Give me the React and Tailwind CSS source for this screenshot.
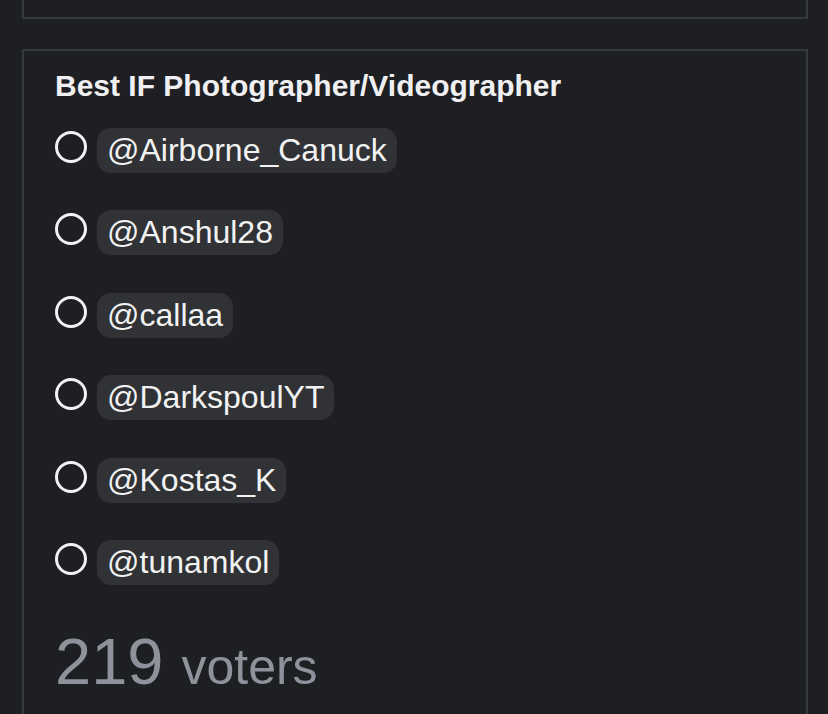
const options = [
  'Airborne_Canuck',
  'Anshul28',
  'callaa',
  'DarkspoulYT',
  'Kostas_K',
  'tunamkol',
];

const App = () => {
  return (
    <div
      className="min-h-[714px] h-[714px] overflow-hidden bg-[#1e1f23] pl-[22px] pr-[20px]"
      style={{ fontFamily: '"Liberation Sans", Arial, sans-serif' }}
    >
      {/* previous poll, only its bottom edge shows */}
      <div className="h-[19px] border-x-2 border-b-2 border-[#35383d]"></div>

      {/* Poll card */}
      <div className="mt-[30px] border-2 border-[#35383d] pl-[31px] pt-[20px] pb-[80px]">
        <h2 className="text-[30px] leading-none font-bold text-[#f0f0f2]">
          Best IF Photographer/Videographer
        </h2>

        <div className="mt-[27px] flex flex-col gap-[37.4px]">
          {options.map((name) => (
            <div key={name} className="flex items-start gap-[10px]">
              <div className="mt-[3px] h-[32px] w-[32px] shrink-0 rounded-full border-[3px] border-[#f2f2f2]"></div>
              <span className="h-[45px] rounded-[14px] bg-[#303236] px-[10px] text-[32px] leading-[45px] text-[#f2f2f2]">
                @{name}
              </span>
            </div>
          ))}
        </div>

        <div className="mt-[44px] flex items-baseline text-[#8e939b]">
          <span className="text-[65px] leading-none">219</span>
          <span className="ml-[18px] text-[50px] leading-none">voters</span>
        </div>
      </div>
    </div>
  );
};

export default App;
